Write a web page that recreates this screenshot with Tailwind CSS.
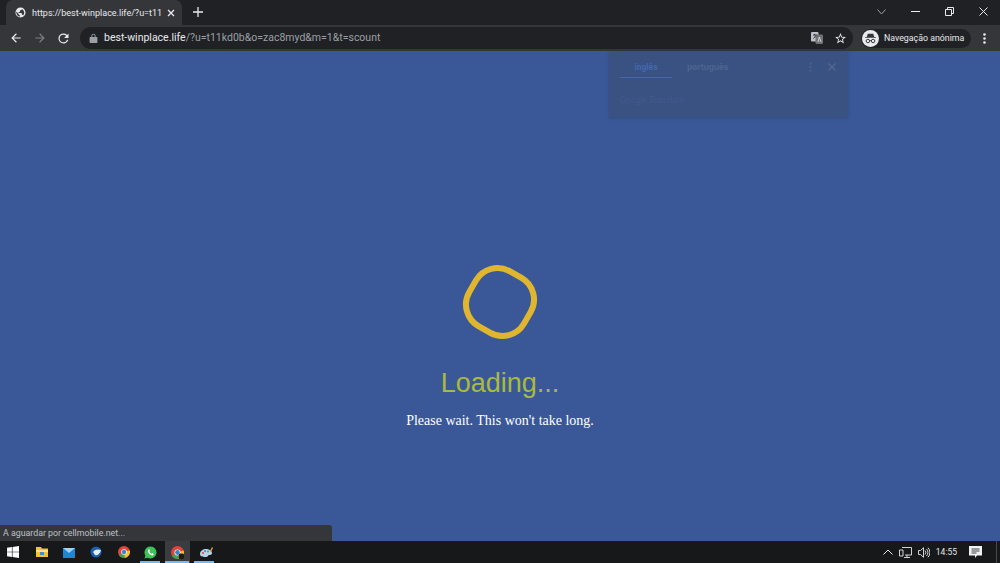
<!DOCTYPE html>
<html lang="pt">
<head>
<meta charset="utf-8">
<title>Loading</title>
<script src="https://cdn.jsdelivr.net/npm/@tailwindcss/browser@4"></script>
</head>
<body class="m-0 overflow-hidden bg-[#3a5897]">
<div class="relative flex h-[563px] w-[1000px] flex-col overflow-hidden font-['Roboto','Liberation_Sans',sans-serif]">

  <!-- tab strip -->
  <header class="flex h-[25px] shrink-0 items-end bg-[#202124]">
    <div class="ml-[6px] flex h-[25px] w-[176px] items-center rounded-t-[7px] bg-[#35363a] pl-[9px] pr-[7px]">
      <svg class="h-[11px] w-[11px] shrink-0" viewBox="0 0 24 24" fill="#e8eaed"><path d="M12 1a11 11 0 1 0 0 22 11 11 0 0 0 0-22zm-1 19.9A9 9 0 0 1 3.2 10L8 15v1c0 1.100.9 2 2 2h1zm6.900-2.500c-.3-.8-1-1.400-1.900-1.400h-1v-3c0-.6-.4-1-1-1H8v-2h2c.6 0 1-.4 1-1V7h2c1.100 0 2-.9 2-2v-.4a9 9 0 0 1 2.900 13.800z"/></svg>
      <span class="ml-[6px] whitespace-nowrap text-[9px] leading-[14px] text-[#e8eaed]">https://best-winplace.life/?u=t11</span>
      <svg class="ml-auto h-[8px] w-[8px] shrink-0" viewBox="0 0 8 8" stroke="#e8eaed" stroke-width="1.300"><path d="M1 1l6 6M7 1L1 7"/></svg>
    </div>
    <svg class="ml-[11px] mb-[8px] h-[10px] w-[10px] shrink-0" viewBox="0 0 10 10" stroke="#e8eaed" stroke-width="1.300"><path d="M5 0v10M0 5h10"/></svg>
    <div class="mb-[9px] ml-auto flex items-center">
      <svg class="mr-[25px] h-[6px] w-[9px]" viewBox="0 0 9 6" fill="none" stroke="#9aa0a6" stroke-width="1"><path d="M.5.5L4.500 5 8.500.5"/></svg>
      <div class="mr-[25px] h-px w-[9px] bg-[#e8eaed]"></div>
      <svg class="mr-[25px] h-[9px] w-[9px]" viewBox="0 0 9 9" fill="none" stroke="#e8eaed" stroke-width="1"><path d="M.5 2.500h6v6h-6zM2.500 2.500v-2h6v6h-2"/></svg>
      <svg class="mr-[12px] h-[9px] w-[9px]" viewBox="0 0 9 9" stroke="#e8eaed" stroke-width="1"><path d="M.5.5l8 8M8.500.5l-8 8"/></svg>
    </div>
  </header>

  <!-- toolbar -->
  <nav class="flex h-[26px] shrink-0 items-center bg-[#35363a] pl-[9px]">
    <svg class="h-[14px] w-[14px] shrink-0" viewBox="0 0 24 24" fill="#e8eaed"><path d="M20 11H7.800l5.600-5.600L12 4l-8 8 8 8 1.400-1.400L7.800 13H20z"/></svg>
    <svg class="ml-[10px] h-[14px] w-[14px] shrink-0" viewBox="0 0 24 24" fill="#7c7f84"><path d="M4 11h12.200l-5.600-5.600L12 4l8 8-8 8-1.400-1.400 5.600-5.600H4z"/></svg>
    <svg class="ml-[9px] h-[15px] w-[15px] shrink-0" viewBox="0 0 24 24" fill="#e8eaed"><path d="M17.650 6.350A8 8 0 1 0 19.700 14h-2.100A6 6 0 1 1 12 6c1.660 0 3.140.69 4.220 1.780L13 11h7V4z"/></svg>
    <div class="ml-[9px] flex h-[22px] w-[773px] shrink-0 items-center rounded-full bg-[#202124] pl-[9px] pr-[6px]">
      <svg class="h-[10px] w-[9px] shrink-0" viewBox="0 0 9 11" fill="#9aa0a6"><path d="M1 4.500h7a.8.8 0 0 1 .8.800v4.900a.8.800 0 0 1-.8.800H1a.8.800 0 0 1-.8-.8V5.300A.8.800 0 0 1 1 4.500zM2.200 4.500V3a2.300 2.300 0 0 1 4.600 0v1.500h-1V3a1.300 1.300 0 0 0-2.600 0v1.500z"/></svg>
      <span class="ml-[6px] whitespace-nowrap text-[10.500px] leading-[14px] text-[#e8eaed]">best-winplace.life<span class="text-[#9aa0a6]">/?u=t11kd0b&amp;o=zac8myd&amp;m=1&amp;t=scount</span></span>
      <svg class="ml-auto h-[12px] w-[12px] shrink-0" viewBox="0 0 12 12"><rect x="0" y="0" width="7.500" height="9.500" rx="1" fill="#bdc1c6"/><rect x="4.500" y="2.500" width="7.500" height="9.500" rx="1" fill="#6f7276"/><path d="M2 3h3.500M3.700 2v1M2.500 6.500L5 3.500" stroke="#35363a" fill="none"/><path d="M7 10l1.300-5L10 10" stroke="#e8eaed" fill="none" stroke-width=".8"/></svg>
      <svg class="ml-[11px] h-[13px] w-[13px] shrink-0" viewBox="0 0 24 24" fill="#e8eaed"><path d="M22 9.200l-7.200-.6L12 2 9.200 8.600 2 9.200l5.500 4.700L5.800 21l6.200-3.700 6.200 3.700-1.600-7.100zM12 15.400l-3.800 2.300 1-4.300-3.300-2.900 4.400-.4L12 6.100l1.700 4 4.400.4-3.300 2.900 1 4.300z"/></svg>
    </div>
    <div class="ml-[8px] flex h-[19px] w-[110px] shrink-0 items-center rounded-full bg-[#202124] pl-[1px]">
      <span class="flex h-[17px] w-[17px] shrink-0 items-center justify-center rounded-full bg-[#e8eaed]">
        <svg class="h-[13px] w-[13px]" viewBox="0 0 12 12" fill="#35363a"><path d="M3.500 1.500h5l1 3h-7zM1 4.800h10v.8H1z"/><path fill="none" stroke="#35363a" stroke-width=".9" d="M2 8.300a1.600 1.600 0 1 0 3.200 0 1.600 1.600 0 1 0-3.200 0M6.800 8.300a1.600 1.600 0 1 0 3.200 0 1.600 1.600 0 1 0-3.200 0M5.200 8h1.600"/></svg>
      </span>
      <span class="ml-[5px] whitespace-nowrap text-[8.800px] leading-[12px] text-[#e8eaed]">Navegação anónima</span>
    </div>
    <svg class="ml-[11.500px] h-[11px] w-[3px] shrink-0" viewBox="0 0 3 11" fill="#e8eaed"><circle cx="1.500" cy="1.500" r="1.300"/><circle cx="1.500" cy="5.500" r="1.300"/><circle cx="1.500" cy="9.500" r="1.300"/></svg>
  </nav>

  <!-- page -->
  <main class="flex min-h-0 flex-1 flex-col items-center bg-[#3a5897] pt-[211px]">
    <svg class="h-[80px] w-[80px] shrink-0" viewBox="-40 -40 80 80" fill="none" stroke="#e0b62e" stroke-width="6"><rect x="-31.600" y="-31.600" width="63.200" height="63.200" rx="25" transform="rotate(30)"/></svg>
    <h1 class="mt-[25px] font-['Liberation_Sans',sans-serif] text-[27px] font-normal leading-[32px] text-[#a9ba3e]">Loading...</h1>
    <p class="mt-[13px] font-['Liberation_Serif',serif] text-[14px] leading-[18px] text-white">Please wait. This won't take long.</p>
  </main>

  <!-- translate popup, dimmed over the page -->
  <aside class="absolute left-[609px] top-[51px] h-[66px] w-[239px] bg-[#3a5282] shadow-[0_1px_3px_rgba(40,50,80,0.35)]">
    <div class="flex h-[27px] items-start pl-[11px]">
      <div class="h-[27px] w-[52px] border-b border-[#4468ad] text-center text-[8.500px] font-bold leading-[32px] text-[#4468ad]">inglês</div>
      <div class="ml-[15px] text-[9px] font-bold leading-[32px] text-[#4c648f]">português</div>
      <svg class="ml-[81px] mt-[11px] h-[10px] w-[3px]" viewBox="0 0 3 10" fill="#4c648f"><circle cx="1.500" cy="1.500" r="1"/><circle cx="1.500" cy="5" r="1"/><circle cx="1.500" cy="8.500" r="1"/></svg>
      <svg class="ml-[16px] mt-[12px] h-[8px] w-[8px]" viewBox="0 0 8 8" stroke="#56698f" stroke-width="1.200"><path d="M.5.5l7 7M7.500.5l-7 7"/></svg>
    </div>
    <p class="ml-[11px] mt-[16px] text-[8.500px] leading-[12px] text-[#42598a]">Google Translate</p>
  </aside>

  <!-- status bubble -->
  <div class="absolute bottom-[22px] left-0 flex h-[16px] w-[332px] items-center rounded-tr-[3px] bg-[#35363a] pl-[3px] pt-[1px] text-[8.800px] text-[#bdc1c6]">A aguardar por cellmobile.net...</div>

  <!-- taskbar -->
  <footer class="flex h-[22px] shrink-0 items-center bg-[#17181a]">
    <svg class="ml-[7px] h-[12px] w-[12px] shrink-0" viewBox="0 0 12 12" fill="#fff"><path d="M0 1.700l4.900-.7v4.700H0zM5.500.9L12 0v5.700H5.500zM0 6.300h4.900V11L0 10.300zM5.500 6.300H12V12l-6.500-.9z"/></svg>
    <svg class="ml-[17px] h-[12px] w-[12px] shrink-0" viewBox="0 0 12 12"><path d="M0 1h5l1 1.500h6V11H0z" fill="#f3c13a"/><path d="M0 4h12v2H0z" fill="#ffe08a"/><rect x="4" y="6" width="4" height="3" fill="#3a8fd6"/></svg>
    <svg class="ml-[15px] h-[11px] w-[12px] shrink-0" viewBox="0 0 12 11"><rect y="1" width="12" height="10" fill="#1c86d6"/><path d="M0 1l6 5 6-5z" fill="#9fd4f7"/></svg>
    <svg class="ml-[15px] h-[12px] w-[12px] shrink-0" viewBox="0 0 12 12"><circle cx="6" cy="6" r="5.500" fill="#1a5fb0"/><path d="M3 6c2-3 5-3 8-2-1 4-4 6-6 5z" fill="#e8eef6"/></svg>
    <svg class="ml-[16px] h-[12px] w-[12px] shrink-0" viewBox="0 0 12 12"><circle cx="6" cy="6" r="6" fill="#e0453a"/><path d="M6 6L1 9.200A6 6 0 0 0 7 11.900z" fill="#3aa655"/><path d="M6 6l5.700-1.800A6 6 0 0 1 7 11.900z" fill="#f5c518"/><circle cx="6" cy="6" r="2.800" fill="#fff"/><circle cx="6" cy="6" r="2.200" fill="#3d7fd9"/></svg>
    <svg class="ml-[14px] h-[13px] w-[13px] shrink-0" viewBox="0 0 13 13"><path d="M6.500.5a6 6 0 0 0-5.100 9.100L.5 12.500l3-.8A6 6 0 1 0 6.500.5z" fill="#3dc456"/><path d="M4.500 3.500c-.8.700-.8 2 .2 3.400 1 1.500 2.600 2.700 3.800 2.500.7-.1 1.300-.8 1.200-1.300L8.300 7l-.8.700c-.8-.3-1.700-1.200-2.100-2.100l.6-.8-.7-1.500z" fill="#fff"/></svg>
    <div class="ml-[8px] flex h-[22px] w-[25px] shrink-0 items-center justify-center bg-[#3b3c3f]">
      <svg class="h-[13px] w-[13px]" viewBox="0 0 12 12"><circle cx="6" cy="6" r="6" fill="#e0453a"/><path d="M6 6L1 9.200A6 6 0 0 0 7 11.900z" fill="#3aa655"/><path d="M6 6l5.700-1.800A6 6 0 0 1 7 11.900z" fill="#f5c518"/><circle cx="6" cy="6" r="2.800" fill="#fff"/><circle cx="6" cy="6" r="2.200" fill="#3d7fd9"/><rect x="7" y="7" width="5" height="5" rx="1.500" fill="#1a1a1a"/></svg>
    </div>
    <svg class="ml-[9px] h-[13px] w-[15px] shrink-0" viewBox="0 0 15 13"><path d="M1 8c0-3 3-5 6-5s6 2 6 4-2 2-3 2-1 2-3 2-6 0-6-3z" fill="#b9d3ea"/><circle cx="4" cy="7" r="1" fill="#d9453a"/><circle cx="6" cy="5" r="1" fill="#3d7fd9"/><circle cx="9" cy="5.500" r="1" fill="#3aa655"/><path d="M11 5l2-4 1 1-2 4z" fill="#e6a23c"/></svg>

    <div class="ml-auto flex items-center">
      <svg class="h-[6px] w-[10px]" viewBox="0 0 10 6" fill="none" stroke="#e8e8e8"><path d="M.5 5.500L5 1l4.500 4.500"/></svg>
      <svg class="ml-[6px] h-[11px] w-[13px]" viewBox="0 0 13 11" fill="none" stroke="#e8e8e8" stroke-width=".9"><path d="M3 .5h9.500v7.500H6M8 8v2.500M5 10.500h6M.5 3h3.500v6H.5z"/></svg>
      <svg class="ml-[6px] h-[11px] w-[12px]" viewBox="0 0 12 11" fill="none" stroke="#e8e8e8" stroke-width=".9"><path d="M.5 3.500h2L5.500.7v9.600L2.500 7.500h-2zM7 3.500a3 3 0 0 1 0 4M8.500 2a5 5 0 0 1 0 7M10 .7a7 7 0 0 1 0 9.600"/></svg>
      <span class="ml-[6px] text-[8.500px] leading-[12px] text-[#e8e8e8]">14:55</span>
      <svg class="ml-[12px] h-[12px] w-[13px]" viewBox="0 0 13 12" fill="#f2f2f2"><path d="M0 0h13v9.500H8L6 12V9.500H0z"/><path d="M2.500 3h8M2.500 5h8M2.500 7h5" stroke="#17181a" stroke-width=".8"/></svg>
      <div class="ml-[14px] mr-[3px] h-[22px] w-px bg-[#4a4a4a]"></div>
    </div>
  </footer>

  <!-- running-app underlines on the taskbar -->
  <div class="absolute bottom-0 left-[140px] h-[2px] w-[20px] bg-[#76b9ed]"></div>
  <div class="absolute bottom-0 left-[165px] h-[2px] w-[24px] bg-[#76b9ed]"></div>
  <div class="absolute bottom-0 left-[194px] h-[2px] w-[20px] bg-[#76b9ed]"></div>
</div>
</body>
</html>
